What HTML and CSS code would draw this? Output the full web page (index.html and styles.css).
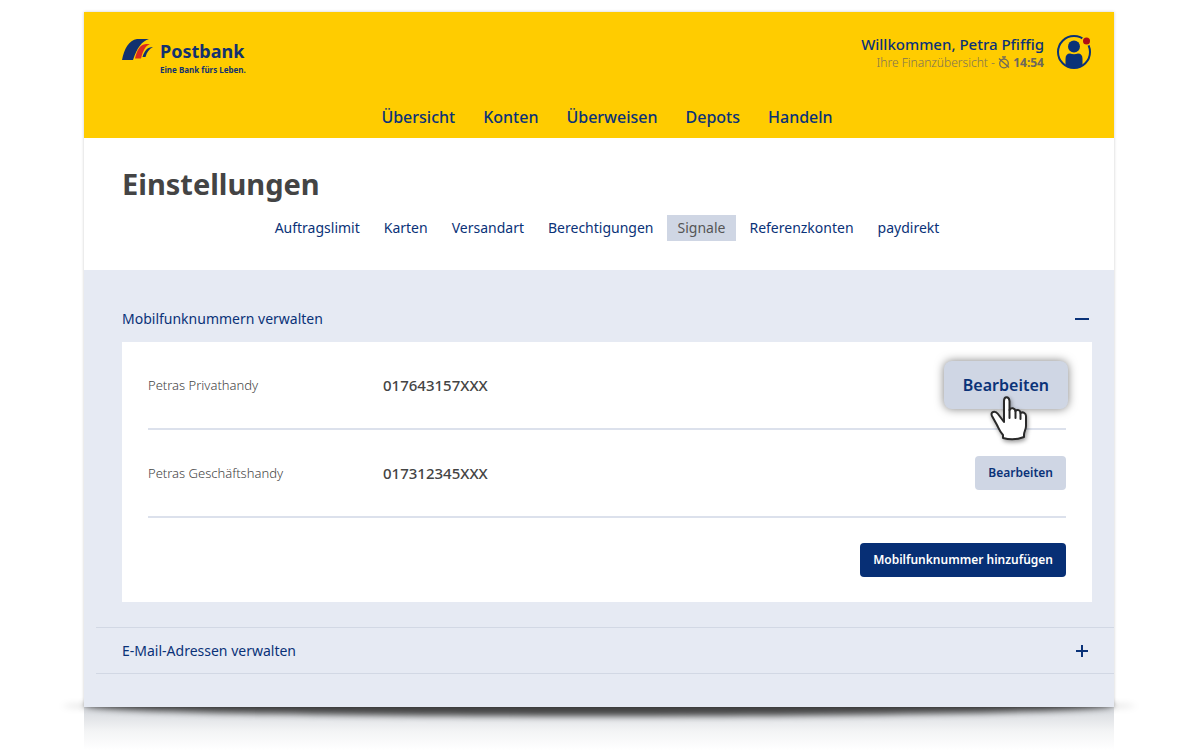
FILE: index.html
```html
<!DOCTYPE html>
<html lang="de">
<head>
<meta charset="utf-8">
<meta name="viewport" content="width=device-width, initial-scale=1">
<title>Postbank – Einstellungen</title>
<link rel="stylesheet" href="styles.css">
</head>
<body>
<div class="stage">
  <div class="page">
    <header class="header">
      <div class="header-top">
        <a class="logo" href="#">
          <svg class="logo-mark" viewBox="0 0 32 22" aria-hidden="true">
            <path fill="#12316f" d="M0 21C2 10 7 1 15 0H27C20 2 15 9 11 21Z"/>
            <path fill="#ffcc00" d="M12 22C14 11 18 5 25 4L33 4V22H12Z"/>
            <path fill="#dc2a1e" d="M13 19.500C15 11 18 5.500 24 5H28C23 7 21 12 19 19.500Z"/>
            <path fill="#12316f" d="M20.500 18C22.500 12 25 8 31 8C27 10 25 13 23.500 18Z"/>
          </svg>
          <span class="logo-text">
            <span class="logo-name">Postbank</span>
            <span class="logo-claim">Eine Bank fürs Leben.</span>
          </span>
        </a>
        <div class="user">
          <div class="user-text">
            <div class="welcome">Willkommen, Petra Pfiffig</div>
            <div class="session">Ihre Finanzübersicht -
              <svg class="timer" viewBox="0 0 12 13" aria-hidden="true" fill="none" stroke="#6d675c" stroke-width="1.300"><circle cx="6" cy="7.500" r="4.300"/><path d="M4 .8h4M6 1v2M1 2.500l10 9"/></svg>
              <strong>14:54</strong></div>
          </div>
          <svg class="avatar" viewBox="0 0 36 36" role="img" aria-label="Profil">
            <circle cx="18" cy="18" r="16" fill="none" stroke="#0a3278" stroke-width="2"/>
            <circle cx="18" cy="12.500" r="6" fill="#0a3278"/>
            <path fill="#0a3278" d="M9.500 31V25Q9.500 19.500 14 19.500Q18 21 22 19.500Q26.500 19.500 26.500 25V31Q18 37 9.500 31Z"/>
            <circle cx="30.500" cy="7" r="5" fill="#ffcc00"/>
            <circle cx="30.500" cy="7" r="3.500" fill="#b00d15"/>
          </svg>
        </div>
      </div>
      <nav class="main-nav" aria-label="Hauptnavigation">
        <a href="#">Übersicht</a><a href="#">Konten</a><a href="#">Überweisen</a><a href="#">Depots</a><a href="#">Handeln</a>
      </nav>
    </header>

    <section class="intro">
      <h1>Einstellungen</h1>
      <nav class="sub-nav" aria-label="Einstellungen">
        <a href="#">Auftragslimit</a><a href="#">Karten</a><a href="#">Versandart</a><a href="#">Berechtigungen</a><a class="active" href="#" aria-current="page">Signale</a><a href="#">Referenzkonten</a><a href="#">paydirekt</a>
      </nav>
    </section>

    <main class="content">
      <button class="accordion" type="button" aria-expanded="true">
        <span>Mobilfunknummern verwalten</span>
        <svg class="sign" viewBox="0 0 14 14" aria-hidden="true"><path d="M0 7h14"/></svg>
      </button>
      <div class="panel">
        <div class="row">
          <span class="row-name">Petras Privathandy</span>
          <span class="row-number">017643157XXX</span>
          <div class="row-action">
            <button class="edit edit-large" type="button">Bearbeiten</button>
            <svg class="pointer" viewBox="0 0 38 46" aria-hidden="true">
              <path fill="#fff" stroke="#292929" stroke-width="2" stroke-linejoin="round" d="M14 26V5C14 0 19 0 19.500 5V14C21 11 25 12 25.500 15C27 13 30.500 14 30.500 17C33 15.500 36 17 36 20V30C36 34 34 35 34 39V41Q24 45 13 42V39C10 36 9 33 7 29L2 20C0 16 5 14 8 18L14 26Z"/>
              <path fill="none" stroke="#292929" stroke-width="2" stroke-linecap="round" d="M19.500 14V22M25.500 15V22M30.500 17V23"/>
            </svg>
          </div>
        </div>
        <div class="row">
          <span class="row-name">Petras Geschäftshandy</span>
          <span class="row-number">017312345XXX</span>
          <div class="row-action"><button class="edit" type="button">Bearbeiten</button></div>
        </div>
        <div class="panel-foot"><button class="add" type="button">Mobilfunknummer hinzufügen</button></div>
      </div>
      <div class="closed">
        <button class="accordion" type="button" aria-expanded="false">
          <span>E-Mail-Adressen verwalten</span>
          <svg class="sign" viewBox="0 0 14 14" aria-hidden="true"><path d="M1 7h12M7 1v12"/></svg>
        </button>
      </div>
    </main>
  </div>
  <div class="shadow" aria-hidden="true"><div class="reflection"></div><div class="curve"></div></div>
</div>
</body>
</html>
```
FILE: styles.css
```css
* { box-sizing: border-box; }
body {
  margin: 0;
  background: #fff;
  color: #444;
  font-family: "Noto Sans", "Open Sans", sans-serif;
  overflow-x: hidden;
}
a { color: #0a3278; text-decoration: none; }
button { border: 0; font-family: inherit; color: #0a3278; cursor: pointer; }

.stage { padding: 12px 86px 0 84px; }
.page { position: relative; z-index: 1; box-shadow: 0 0 3px rgba(0, 0, 0, .2); }

.header { padding: 22px 22px 8px 38px; background: #ffcc00; }
.header-top { display: flex; justify-content: space-between; align-items: flex-start; }
.logo { display: flex; gap: 6px; padding-top: 5px; color: #12316f; }
.logo-mark { width: 32px; height: 22px; }
.logo-text { display: flex; flex-direction: column; }
.logo-name { font-size: 18px; line-height: 24px; font-weight: 700; }
.logo-claim { font-size: 8px; line-height: 14px; font-weight: 700; }
.user { display: flex; gap: 12px; }
.user-text { text-align: right; }
.welcome { color: #0a3278; font-size: 15px; line-height: 20px; font-weight: 500; }
.session { color: #7d7258; font-size: 12px; line-height: 17px; font-weight: 300; }
.session strong { color: #6d675c; font-weight: 700; }
.timer { width: 12px; height: 13px; vertical-align: -2px; }
.avatar { width: 36px; height: 36px; }
.main-nav {
  display: flex; justify-content: center; gap: 28px;
  padding-top: 27px; font-size: 16px; line-height: 26px; font-weight: 500;
}

.intro { padding: 26px 22px 29px 38px; background: #fff; }
h1 { margin: 0; font-size: 29px; line-height: 40px; font-weight: 700; }
.sub-nav {
  display: flex; justify-content: center; gap: 2px;
  padding-top: 11px; font-size: 14px; line-height: 26px; font-weight: 400;
}
.sub-nav a { padding: 0 11px; }
.sub-nav .active { background: #cfd6e4; color: #555; }

.content { padding: 35px 0 33px; background: #e6eaf3; }
.accordion {
  display: flex; justify-content: space-between; align-items: center;
  width: 100%; padding: 0 25px 0 38px; background: none;
  font-size: 14px; line-height: 28px; font-weight: 400; text-align: left;
}
.sign { width: 14px; height: 14px; fill: none; stroke: #0a3278; stroke-width: 2; }
.panel { margin: 9px 22px 25px 38px; padding: 0 26px 25px; background: #fff; }
.row {
  display: grid; grid-template-columns: 235px 1fr auto; align-items: center;
  height: 88px; border-bottom: 2px solid #dce1ec;
}
.row-name { font-size: 13px; font-weight: 300; }
.row-number { font-size: 15px; font-weight: 500; }
.row-action { position: relative; }
.edit {
  display: block; padding: 0 13px; border-radius: 4px; background: #cfd6e4;
  font-size: 12px; line-height: 34px; font-weight: 600;
}
.edit-large {
  padding: 0 19px; margin-right: -2px; border-radius: 8px;
  font-size: 16px; line-height: 48px;
  box-shadow: 0 0 10px rgba(0, 0, 0, .5);
}
.pointer {
  position: absolute; left: 46px; top: 35px; width: 38px; height: 46px;
  filter: drop-shadow(1px 2px 2px rgba(0, 0, 0, .4));
}
.panel-foot { display: flex; justify-content: flex-end; padding-top: 25px; }
.add {
  padding: 0 13px; border-radius: 4px; background: #072f75; color: #fff;
  font-size: 12px; line-height: 34px; font-weight: 600;
}
.closed { margin-left: 12px; border: solid #d2d8e4; border-width: 1px 0; }
.closed .accordion { padding-left: 26px; line-height: 45px; }

.shadow { position: relative; height: 43px; }
.shadow::before {
  content: ""; position: absolute; left: -22px; right: -22px; top: -7px; height: 12px;
  border-radius: 50%; background: rgba(0, 0, 0, .14); filter: blur(3px);
}
.reflection {
  position: absolute; inset: 0;
  background: linear-gradient(#d4d7dc, #f3f4f5 55%, #fff);
}
.curve {
  position: absolute; left: 0; right: 0; top: -12px; height: 21px;
  border-radius: 50%; background: #444; filter: blur(3px);
}
```
